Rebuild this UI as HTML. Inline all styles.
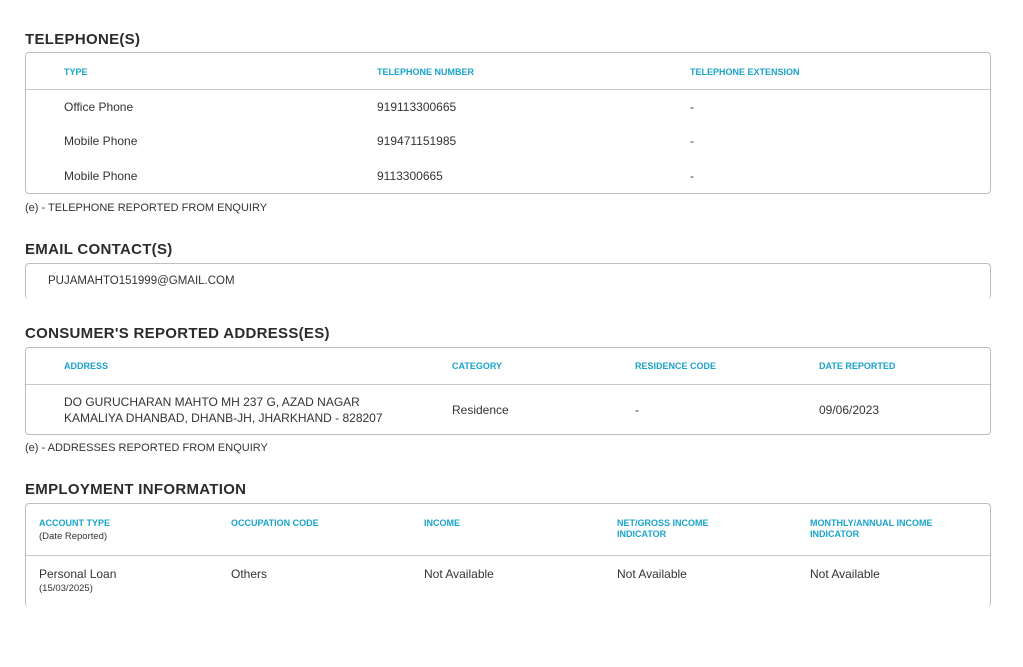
<!DOCTYPE html>
<html><head><meta charset="utf-8"><style>
body{margin:0;width:1023px;height:667px;background:#fff;font-family:"Liberation Sans",sans-serif;color:#333;position:relative;overflow:hidden}
.a{position:absolute;white-space:nowrap}
.t{font-size:15px;font-weight:bold;color:#2b2b2b;letter-spacing:0.3px}
.h{font-size:9px;font-weight:bold;color:#1aa3c9}
.v{font-size:12px;color:#333}
.s{font-size:10px;color:#333}
.box{position:absolute;border:1px solid #bdbdbd;border-radius:4px;box-sizing:border-box}
.ln{position:absolute;height:1px;background:#c8c8c8}
</style></head><body>
<div class="a t" style="left:25px;top:31px">TELEPHONE(S)</div>
<div class="box" style="left:25px;top:52px;width:966px;height:142px"></div>
<div class="ln" style="left:26px;top:89px;width:964px"></div>
<div class="a h" style="left:64px;top:67px">TYPE</div>
<div class="a h" style="left:377px;top:67px">TELEPHONE NUMBER</div>
<div class="a h" style="left:690px;top:67px">TELEPHONE EXTENSION</div>
<div class="a v" style="left:64px;top:100px">Office Phone</div>
<div class="a v" style="left:377px;top:100px">919113300665</div>
<div class="a v" style="left:690px;top:100px">-</div>
<div class="a v" style="left:64px;top:134px">Mobile Phone</div>
<div class="a v" style="left:377px;top:134px">919471151985</div>
<div class="a v" style="left:690px;top:134px">-</div>
<div class="a v" style="left:64px;top:169px">Mobile Phone</div>
<div class="a v" style="left:377px;top:169px">9113300665</div>
<div class="a v" style="left:690px;top:169px">-</div>
<div class="a s" style="left:25px;top:202px;font-size:11px">(e) - TELEPHONE REPORTED FROM ENQUIRY</div>

<div class="a t" style="left:25px;top:241px">EMAIL CONTACT(S)</div>
<div class="box" style="left:25px;top:263px;width:966px;height:36px;border-bottom:none"></div>
<div class="a v" style="left:48px;top:275px;font-size:11.5px">PUJAMAHTO151999@GMAIL.COM</div>

<div class="a t" style="left:25px;top:325px">CONSUMER'S REPORTED ADDRESS(ES)</div>
<div class="box" style="left:25px;top:347px;width:966px;height:88px"></div>
<div class="ln" style="left:26px;top:384px;width:964px"></div>
<div class="a h" style="left:64px;top:361px">ADDRESS</div>
<div class="a h" style="left:452px;top:361px">CATEGORY</div>
<div class="a h" style="left:635px;top:361px">RESIDENCE CODE</div>
<div class="a h" style="left:819px;top:361px">DATE REPORTED</div>
<div class="a v" style="left:64px;top:394px;line-height:16px">DO GURUCHARAN MAHTO MH 237 G, AZAD NAGAR<br>KAMALIYA DHANBAD, DHANB-JH, JHARKHAND - 828207</div>
<div class="a v" style="left:452px;top:403px">Residence</div>
<div class="a v" style="left:635px;top:403px">-</div>
<div class="a v" style="left:819px;top:403px">09/06/2023</div>
<div class="a s" style="left:25px;top:442px;font-size:11px">(e) - ADDRESSES REPORTED FROM ENQUIRY</div>

<div class="a t" style="left:25px;top:481px">EMPLOYMENT INFORMATION</div>
<div class="box" style="left:25px;top:503px;width:966px;height:104px;border-bottom:none"></div>
<div class="ln" style="left:26px;top:555px;width:964px"></div>
<div class="a h" style="left:39px;top:518px">ACCOUNT TYPE</div>
<div class="a s" style="left:39px;top:531px;font-size:9.5px">(Date Reported)</div>
<div class="a h" style="left:231px;top:518px">OCCUPATION CODE</div>
<div class="a h" style="left:424px;top:518px">INCOME</div>
<div class="a h" style="left:617px;top:518px;line-height:11px">NET/GROSS INCOME<br>INDICATOR</div>
<div class="a h" style="left:810px;top:518px;line-height:11px">MONTHLY/ANNUAL INCOME<br>INDICATOR</div>
<div class="a v" style="left:39px;top:567px">Personal Loan</div>
<div class="a s" style="left:39px;top:583px;font-size:9.5px">(15/03/2025)</div>
<div class="a v" style="left:231px;top:567px">Others</div>
<div class="a v" style="left:424px;top:567px">Not Available</div>
<div class="a v" style="left:617px;top:567px">Not Available</div>
<div class="a v" style="left:810px;top:567px">Not Available</div>
</body></html>
